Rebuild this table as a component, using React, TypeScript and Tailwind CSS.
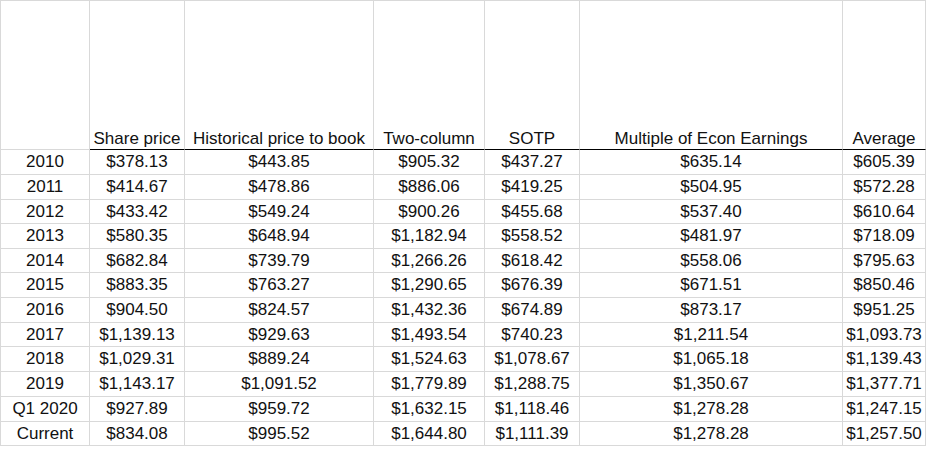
const headers = [
  "",
  "Share price",
  "Historical price to book",
  "Two-column",
  "SOTP",
  "Multiple of Econ Earnings",
  "Average",
];

const rows: { label: string; values: string[]; h: string }[] = [
  { label: "2010", values: ["$378.13", "$443.85", "$905.32", "$437.27", "$635.14", "$605.39"], h: "h-[25px]" },
  { label: "2011", values: ["$414.67", "$478.86", "$886.06", "$419.25", "$504.95", "$572.28"], h: "h-[25px]" },
  { label: "2012", values: ["$433.42", "$549.24", "$900.26", "$455.68", "$537.40", "$610.64"], h: "h-[24px]" },
  { label: "2013", values: ["$580.35", "$648.94", "$1,182.94", "$558.52", "$481.97", "$718.09"], h: "h-[25px]" },
  { label: "2014", values: ["$682.84", "$739.79", "$1,266.26", "$618.42", "$558.06", "$795.63"], h: "h-[24px]" },
  { label: "2015", values: ["$883.35", "$763.27", "$1,290.65", "$676.39", "$671.51", "$850.46"], h: "h-[25px]" },
  { label: "2016", values: ["$904.50", "$824.57", "$1,432.36", "$674.89", "$873.17", "$951.25"], h: "h-[25px]" },
  { label: "2017", values: ["$1,139.13", "$929.63", "$1,493.54", "$740.23", "$1,211.54", "$1,093.73"], h: "h-[24px]" },
  { label: "2018", values: ["$1,029.31", "$889.24", "$1,524.63", "$1,078.67", "$1,065.18", "$1,139.43"], h: "h-[25px]" },
  { label: "2019", values: ["$1,143.17", "$1,091.52", "$1,779.89", "$1,288.75", "$1,350.67", "$1,377.71"], h: "h-[25px]" },
  { label: "Q1 2020", values: ["$927.89", "$959.72", "$1,632.15", "$1,118.46", "$1,278.28", "$1,247.15"], h: "h-[25px]" },
  { label: "Current", values: ["$834.08", "$995.52", "$1,644.80", "$1,111.39", "$1,278.28", "$1,257.50"], h: "h-[24px]" },
];

const App = () => {
  return (
    <div className="w-[930px] h-[450px] bg-white text-[#111] font-['Liberation_Sans',Arial,sans-serif] text-[17px]">
      <div className="w-[926px] border-l border-t border-[#d9d9d9] grid grid-cols-[89px_95px_189px_111px_95px_263px_83px]">
        {headers.map((h, i) => (
          <div
            key={i}
            className={
              "h-[149px] flex items-end justify-center border-r border-[#d9d9d9] whitespace-nowrap leading-[20px] " +
              (i === 0 ? "border-b border-b-[#d9d9d9]" : "border-b border-b-black")
            }
          >
            {h}
          </div>
        ))}
        {rows.map((r) => (
          <>
            <div
              key={r.label}
              className={r.h + " flex items-center justify-center border-r border-b border-[#d9d9d9] whitespace-nowrap"}
            >
              {r.label}
            </div>
            {r.values.map((v, j) => (
              <div
                key={r.label + j}
                className={r.h + " flex items-center justify-center border-r border-b border-[#d9d9d9] whitespace-nowrap"}
              >
                {v}
              </div>
            ))}
          </>
        ))}
      </div>
    </div>
  );
};

export default App;
